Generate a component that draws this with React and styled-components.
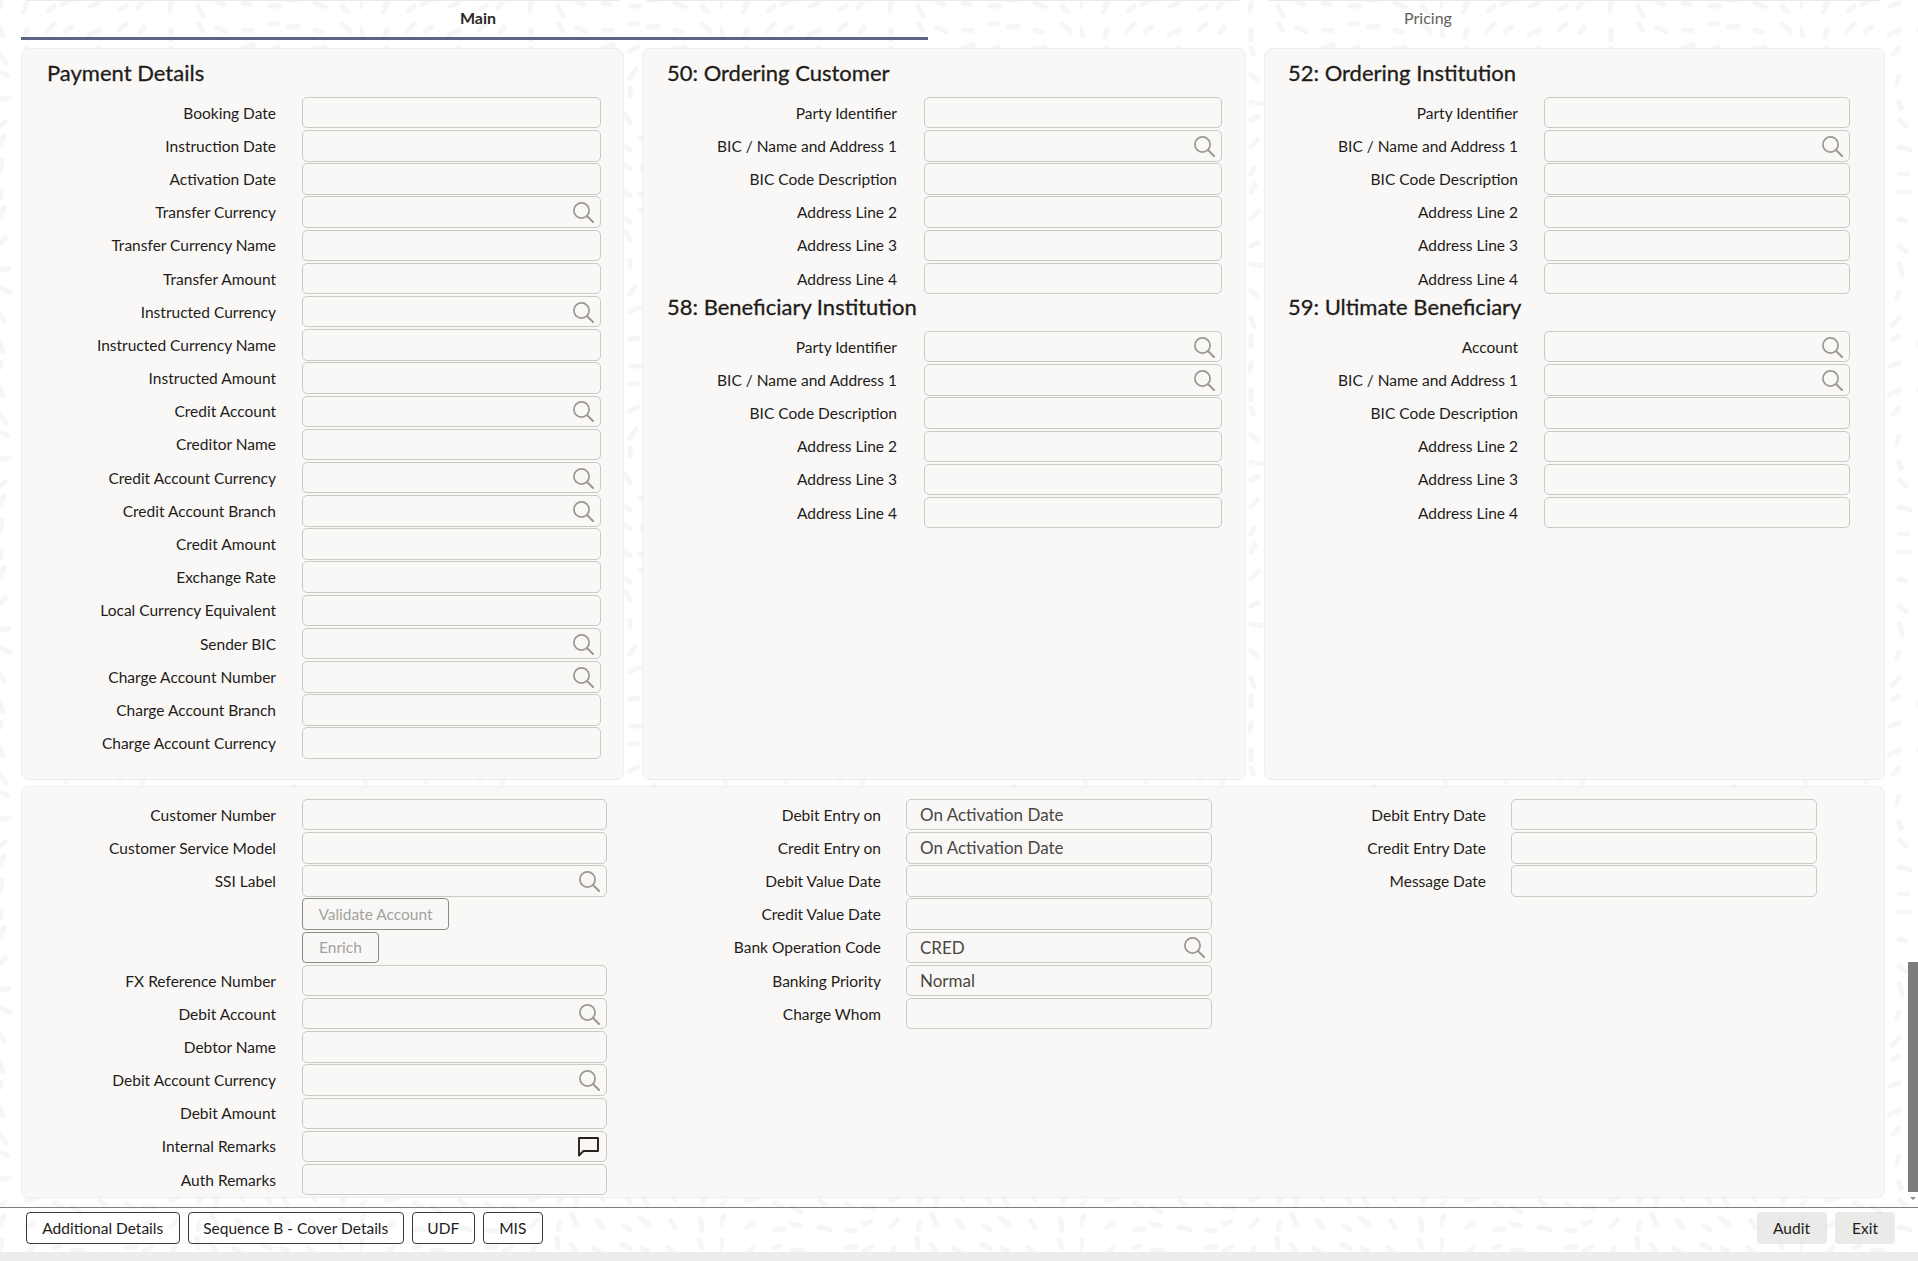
import React from 'react';
import styled, { createGlobalStyle } from 'styled-components';

// faint dash pattern behind the panels, angle drifts so it looks like a swirl
const makePattern = () => {
  const tile = 360;
  const step = 24;
  let lines = '';
  for (let y = 0; y < tile; y += step) {
    for (let x = 0; x < tile; x += step) {
      const a = Math.sin((x / tile) * Math.PI * 2) * 1.4 + Math.cos((y / tile) * Math.PI * 2) * 1.4;
      const len = 7 + ((x * 7 + y * 13) % 5);
      const jx = (x * 11 + y * 3) % 9;
      const jy = (x * 5 + y * 17) % 9;
      const cx = x + jx;
      const cy = y + jy;
      const dx = (Math.cos(a) * len).toFixed(1);
      const dy = (Math.sin(a) * len).toFixed(1);
      lines += `<path d='M${cx} ${cy}l${dx} ${dy}'/>`;
    }
  }
  const svg = `<svg xmlns='http://www.w3.org/2000/svg' width='${tile}' height='${tile}'><g stroke='#f6f6f6' stroke-width='5' stroke-linecap='round'>${lines}</g></svg>`;
  return `url("data:image/svg+xml,${encodeURIComponent(svg)}")`;
};

const GlobalStyle = createGlobalStyle`
  html, body {
    margin: 0;
    padding: 0;
    background: #fff;
  }
  * {
    box-sizing: border-box;
  }
`;

const Page = styled.div`
  position: relative;
  width: 1918px;
  height: 1261px;
  display: flex;
  flex-direction: column;
  overflow: hidden;
  font-family: Lato, "Liberation Sans", sans-serif;
  color: #1f1c1a;
  background-color: #fff;
  background-image: ${makePattern()};
`;

const Main = styled.div`
  flex: 1;
  padding-left: 21px;
  width: 1885px;
`;

const EdgeRow = styled.div`
  display: grid;
  grid-template-columns: 603px 604px 621px;
  column-gap: 18px;
  height: 1px;
`;

const Edge = styled.div`
  margin: 0 5px;
  background: #ecebea;
`;

const Tabs = styled.div`
  display: flex;
  height: 39px;
`;

const Tab = styled.div`
  width: ${(p) => p.$width}px;
  flex: none;
  height: 39px;
  padding: 7px 0 0 ${(p) => p.$offset}px;
  text-align: center;
  font-size: 16px;
  line-height: 20px;
  font-weight: ${(p) => (p.$active ? 700 : 400)};
  color: ${(p) => (p.$active ? '#2b2826' : '#615e5b')};
  border-bottom: 3px solid ${(p) => (p.$active ? '#5a6583' : 'transparent')};
`;

const Columns = styled.div`
  display: grid;
  grid-template-columns: 603px 604px 621px;
  column-gap: 18px;
  margin-top: 8px;
`;

const Panel = styled.section`
  height: ${(p) => p.$height}px;
  padding-top: ${(p) => p.$top}px;
  background: #f9f8f6;
  border: 1px solid #eeedeb;
  border-radius: 8px;
`;

const Heading = styled.h2`
  margin: 0 0 11px ${(p) => p.$left}px;
  height: 24px;
  font-size: 22px;
  line-height: 24px;
  font-weight: 400;
  color: #1f1c1a;
  -webkit-text-stroke: 0.3px #1f1c1a;
`;

const Row = styled.div`
  display: grid;
  grid-template-columns: ${(p) => `${p.$label}px ${p.$field}px`};
  column-gap: ${(p) => p.$gap}px;
  height: 33.2px;
  align-items: center;
`;

const Label = styled.label`
  text-align: right;
  font-size: 15.5px;
  white-space: nowrap;
  color: #1f1c1a;
`;

const Field = styled.div`
  height: 31.5px;
  display: flex;
  align-items: center;
  justify-content: space-between;
  padding: 0 6px 0 13px;
  border: 1px solid #cbc9c6;
  border-radius: 5px;
  background: #f9f8f6;
  font-size: 17px;
  color: #4a4744;
`;

const Glyph = styled.svg`
  margin-left: auto;
  flex: none;
  display: block;
`;

const FormButton = styled.button`
  justify-self: start;
  width: ${(p) => p.$width}px;
  height: 31.5px;
  padding: 0;
  border: 1px solid #8d8b88;
  border-radius: 4px;
  background: transparent;
  font: inherit;
  font-size: 15.5px;
  color: #a3a19e;
`;

const LowerPanel = styled.section`
  margin-top: 6px;
  height: 412px;
  padding-top: 11px;
  display: grid;
  grid-template-columns: 586px 586px auto;
  column-gap: 19px;
  background: #f9f8f6;
  border: 1px solid #eeedeb;
  border-radius: 8px;
`;

const Stack = styled.div`
  display: flex;
  flex-direction: column;
`;

const Footer = styled.footer`
  height: 45px;
  display: flex;
  justify-content: space-between;
  padding: 4px 23px 0 26px;
  border-top: 1px solid #7f7f7f;
`;

const ButtonGroup = styled.div`
  display: flex;
  gap: 8.5px;
`;

const FooterButton = styled.button`
  width: ${(p) => p.$width}px;
  height: 32px;
  padding: 0;
  border: 1px solid #3a3835;
  border-radius: 4px;
  background: transparent;
  font: inherit;
  font-size: 15.5px;
  color: #1f1c1a;
`;

const QuietButton = styled(FooterButton)`
  border: none;
  background: rgba(222, 222, 220, 0.65);
`;

const BottomBand = styled.div`
  height: 9px;
  background: #ececec;
`;

const ScrollThumb = styled.div`
  position: absolute;
  top: 962px;
  right: 0;
  width: 10px;
  height: 230px;
  background: #7c7c7c;
`;

const ScrollArrow = styled.div`
  position: absolute;
  top: 1197px;
  right: 2px;
  width: 0;
  height: 0;
  border-left: 3px solid transparent;
  border-right: 3px solid transparent;
  border-top: 3px solid #8a8a8a;
`;

const SearchIcon = () => (
  <Glyph width="22" height="22" viewBox="0 0 22 22" fill="none" stroke="#9a9794">
    <circle cx="9.5" cy="9.5" r="7.6" strokeWidth="1.7" />
    <path d="M15 15l6 6" strokeWidth="2" strokeLinecap="round" />
  </Glyph>
);

const CommentIcon = () => (
  <Glyph width="23" height="22" viewBox="0 0 23 22" fill="none" stroke="#24211f" strokeWidth="1.9">
    <path d="M2 3h19v13H6.5L2 20.5z" strokeLinejoin="round" />
  </Glyph>
);

const FormRow = ({ name, search, comment, value, size }) => (
  <Row $label={size.label} $field={size.field} $gap={size.gap}>
    <Label>{name}</Label>
    <Field>
      {value}
      {search && <SearchIcon />}
      {comment && <CommentIcon />}
    </Field>
  </Row>
);

const rows = (list, size) =>
  list.map((item) => {
    const data = typeof item === 'string' ? { name: item } : item;
    return <FormRow key={data.name} {...data} size={size} />;
  });

const paymentRows = [
  'Booking Date',
  'Instruction Date',
  'Activation Date',
  { name: 'Transfer Currency', search: true },
  'Transfer Currency Name',
  'Transfer Amount',
  { name: 'Instructed Currency', search: true },
  'Instructed Currency Name',
  'Instructed Amount',
  { name: 'Credit Account', search: true },
  'Creditor Name',
  { name: 'Credit Account Currency', search: true },
  { name: 'Credit Account Branch', search: true },
  'Credit Amount',
  'Exchange Rate',
  'Local Currency Equivalent',
  { name: 'Sender BIC', search: true },
  { name: 'Charge Account Number', search: true },
  'Charge Account Branch',
  'Charge Account Currency',
];

const partyRows = [
  'Party Identifier',
  { name: 'BIC / Name and Address 1', search: true },
  'BIC Code Description',
  'Address Line 2',
  'Address Line 3',
  'Address Line 4',
];

const beneficiaryInstitution = [
  { name: 'Party Identifier', search: true },
  { name: 'BIC / Name and Address 1', search: true },
  'BIC Code Description',
  'Address Line 2',
  'Address Line 3',
  'Address Line 4',
];

const ultimateBeneficiary = [
  { name: 'Account', search: true },
  { name: 'BIC / Name and Address 1', search: true },
  'BIC Code Description',
  'Address Line 2',
  'Address Line 3',
  'Address Line 4',
];

const customerRows = ['Customer Number', 'Customer Service Model', { name: 'SSI Label', search: true }];

const debitRows = [
  'FX Reference Number',
  { name: 'Debit Account', search: true },
  'Debtor Name',
  { name: 'Debit Account Currency', search: true },
  'Debit Amount',
  { name: 'Internal Remarks', comment: true },
  'Auth Remarks',
];

const entryRows = [
  { name: 'Debit Entry on', value: 'On Activation Date' },
  { name: 'Credit Entry on', value: 'On Activation Date' },
  'Debit Value Date',
  'Credit Value Date',
  { name: 'Bank Operation Code', value: 'CRED', search: true },
  { name: 'Banking Priority', value: 'Normal' },
  'Charge Whom',
];

const dateRows = ['Debit Entry Date', 'Credit Entry Date', 'Message Date'];

const paymentSize = { label: 254, field: 299, gap: 26 };
const middleSize = { label: 254, field: 298, gap: 27 };
const rightSize = { label: 253, field: 306, gap: 26 };
const lowerLeftSize = { label: 254, field: 305, gap: 26 };
const lowerSize = { label: 254, field: 306, gap: 25 };

const App = () => (
  <Page>
    <GlobalStyle />
    <Main>
      <EdgeRow>
        <Edge />
        <Edge />
        <Edge />
      </EdgeRow>
      <Tabs>
        <Tab $active $width={907} $offset={7}>Main</Tab>
        <Tab $width={1000} $offset={0}>Pricing</Tab>
      </Tabs>
      <Columns>
        <Panel $height={732} $top={12}>
          <Heading $left={25}>Payment Details</Heading>
          {rows(paymentRows, paymentSize)}
        </Panel>
        <Panel $height={732} $top={12}>
          <Heading $left={24}>50: Ordering Customer</Heading>
          {rows(partyRows, middleSize)}
          <Heading $left={24}>58: Beneficiary Institution</Heading>
          {rows(beneficiaryInstitution, middleSize)}
        </Panel>
        <Panel $height={732} $top={12}>
          <Heading $left={23}>52: Ordering Institution</Heading>
          {rows(partyRows, rightSize)}
          <Heading $left={23}>59: Ultimate Beneficiary</Heading>
          {rows(ultimateBeneficiary, rightSize)}
        </Panel>
      </Columns>
      <LowerPanel>
        <Stack>
          {rows(customerRows, lowerLeftSize)}
          <Row $label={lowerLeftSize.label} $field={lowerLeftSize.field} $gap={lowerLeftSize.gap}>
            <span />
            <FormButton $width={147}>Validate Account</FormButton>
          </Row>
          <Row $label={lowerLeftSize.label} $field={lowerLeftSize.field} $gap={lowerLeftSize.gap}>
            <span />
            <FormButton $width={77}>Enrich</FormButton>
          </Row>
          {rows(debitRows, lowerLeftSize)}
        </Stack>
        <Stack>{rows(entryRows, lowerSize)}</Stack>
        <Stack>{rows(dateRows, lowerSize)}</Stack>
      </LowerPanel>
    </Main>
    <Footer>
      <ButtonGroup>
        <FooterButton $width={153.5}>Additional Details</FooterButton>
        <FooterButton $width={215.5}>Sequence B - Cover Details</FooterButton>
        <FooterButton $width={62.5}>UDF</FooterButton>
        <FooterButton $width={59.5}>MIS</FooterButton>
      </ButtonGroup>
      <ButtonGroup>
        <QuietButton $width={70}>Audit</QuietButton>
        <QuietButton $width={60}>Exit</QuietButton>
      </ButtonGroup>
    </Footer>
    <BottomBand />
    <ScrollThumb />
    <ScrollArrow />
  </Page>
);

export default App;
